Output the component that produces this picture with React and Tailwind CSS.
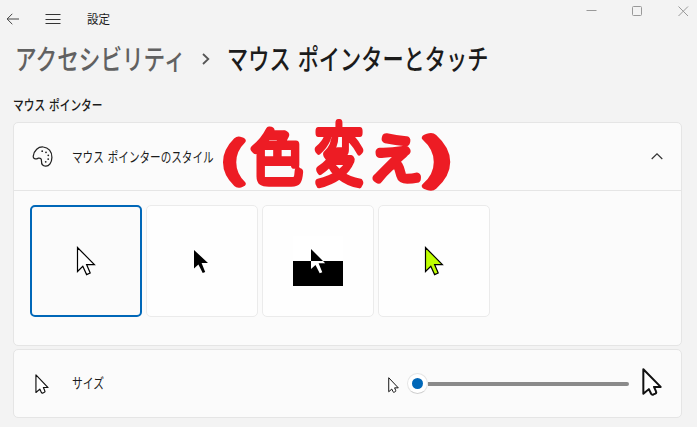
const CLASSIC = "M0.5 0.5V24.5L5.8 19.3L9.6 27.6L13.2 26L9.6 17.6H17.4Z";

function Label({ className, children }) {
  return (
    <span className={`block w-max origin-left whitespace-nowrap ${className}`}>{children}</span>
  );
}

function OutlineCursor({ className, width }) {
  return (
    <svg className={className} viewBox="0 0 18 26" preserveAspectRatio="none" fill="white" stroke="#111" strokeWidth={width} strokeLinejoin="round">
      <path d="M1.2 1.2V24L6.2 19.6L8.2 23.9Q8.9 25.2 10.3 24.6L12 23.8Q13.2 23.1 12.6 21.8L10.8 17.6H16.8Z" />
    </svg>
  );
}

function Tile({ selected, children }) {
  return (
    <button
      className={`relative size-28 shrink-0 rounded-[5px] ${selected ? "border-2 border-[#0067b8] bg-[#fbfbfb]" : "border border-[#ebebeb] bg-[#fefefe]"}`}
    >
      {children}
    </button>
  );
}

function Annotation() {
  return (
    <svg
      className="pointer-events-none absolute left-[209px] top-[-12px] h-[88px] w-[244px] overflow-visible"
      viewBox="0 0 244 88"
      fill="#ed1c24"
      stroke="#ed1c24"
      strokeWidth="6.8"
      strokeLinejoin="round"
      strokeLinecap="round"
      fontFamily="'Noto Sans CJK JP', sans-serif"
      fontSize="50"
      fontWeight="100"
      textAnchor="middle"
    >
      <text transform="translate(9 48) scale(1.45 .89)" y="19" strokeWidth="7.5">(</text>
      <text transform="translate(54 46) scale(1.02 1.15)" y="19">色</text>
      <text transform="translate(116 42) scale(.96 1.35)" y="19" strokeWidth="5.8">変</text>
      <text transform="translate(173 47) scale(1.05 1.05)" y="19" strokeWidth="8">え</text>
      <text transform="translate(216 47) scale(1.8 1)" y="19" strokeWidth="7.5">)</text>
    </svg>
  );
}

export default function App() {
  return (
    <main
      lang="ja"
      className="flex h-[427px] w-[697px] flex-col overflow-hidden bg-[#f3f3f3] font-['Noto_Sans_CJK_JP',sans-serif] text-[#1b1b1b]"
    >
      <header className="flex h-[38px] shrink-0 items-start pl-[6px]">
        <svg className="mt-[13px] h-3 w-[14px]" viewBox="0 0 14 12" fill="none" stroke="#444">
          <path d="M13 6H1.2M6.3 .8L1.1 6L6.3 11.2" />
        </svg>
        <svg className="ml-[25px] mt-[13px] h-3 w-4" viewBox="0 0 16 12" stroke="#333">
          <path d="M0.5 1.5H15.5M0.5 6.5H15.5M0.5 10.5H15.5" />
        </svg>
        <Label className="ml-[26px] mt-[10px] text-[12px] leading-[18px] scale-x-[.96]">設定</Label>
        <div className="ml-auto flex pr-[8px] pt-[5px] text-[#999]">
          <svg className="h-3 w-[11px]" viewBox="0 0 11 12" stroke="currentColor">
            <path d="M.5 5.5H10.5" />
          </svg>
          <svg className="ml-[35px] h-3 w-[11px]" viewBox="0 0 11 12" fill="none" stroke="currentColor">
            <rect x=".5" y="1.5" width="9" height="9" rx="1" />
          </svg>
          <svg className="ml-[35px] h-3 w-[11px]" viewBox="0 0 11 12" stroke="currentColor">
            <path d="M.5 1.5L10 11M10 1.5L.5 11" />
          </svg>
        </div>
      </header>

      <h1 className="flex h-10 shrink-0 items-center pl-[15px] text-[28px] font-medium leading-10">
        <span className="w-[187px]">
          <Label className="text-[#616161] scale-x-[.772]">アクセシビリティ</Label>
        </span>
        <svg className="mt-[2px] h-3 w-2" viewBox="0 0 8 12" fill="none" stroke="#555" strokeWidth="1.8">
          <path d="M1 1L6.3 6L1 11" />
        </svg>
        <span className="ml-[17px] w-[280px]">
          <Label className="[word-spacing:3px] scale-x-[.757]">マウス ポインターとタッチ</Label>
        </span>
      </h1>

      <h2 className="mt-4 shrink-0 pl-[13px] text-[14px] font-medium leading-5">
        <Label className="[word-spacing:2px] scale-x-[.764]">マウス ポインター</Label>
      </h2>

      <section className="relative ml-[13px] mt-2 h-56 w-[669px] shrink-0 rounded-[5px] border border-[#e5e5e5] bg-[#fbfbfb]">
        <div className="flex h-[68px] items-center border-b border-[#e5e5e5] pl-[18px] pr-[18px]">
          <svg className="h-[21px] w-[21px]" viewBox="0 0 21 21" fill="none" stroke="#222" strokeWidth="1.25">
            <path d="M1.2 10.3C2 4 6.4.7 11.1 1C16.5 1.4 20 5.7 19.9 11.4C19.8 16.8 17 20.3 13.6 20.1C10.4 19.9 9.4 17.6 9.5 15.2C9.6 12.8 8.1 11.6 6.3 12.2C5.1 12.6 4.4 13.4 3 12.8C1.7 12.4 1 11.7 1.2 10.3Z" />
            <g fill="#222" stroke="none">
              <circle cx="10.2" cy="5.2" r=".9" />
              <circle cx="14" cy="6.3" r=".9" />
              <circle cx="16.3" cy="9.3" r=".9" />
              <circle cx="16.2" cy="13.1" r=".9" />
              <circle cx="13.7" cy="15.8" r=".9" />
            </g>
          </svg>
          <Label className="-mt-[2px] ml-[19px] text-[14px] leading-5 [word-spacing:2px] scale-x-[.757]">マウス ポインターのスタイル</Label>
          <svg className="ml-auto h-[7px] w-3" viewBox="0 0 12 7" fill="none" stroke="#333" strokeWidth="1.2">
            <path d="M.7 6L6 .9L11.3 6" />
          </svg>
        </div>
        <div className="flex gap-1 pl-4 pt-[14px]">
          <Tile selected>
            <svg className="ml-[45px] h-[29px] w-[18px] overflow-visible" viewBox="0 0 18 29" fill="white" stroke="black" strokeWidth="1.2">
              <path d={CLASSIC} />
            </svg>
          </Tile>
          <Tile>
            <svg className="ml-[47px] h-[23px] w-[14px]" viewBox="0 0 14 23">
              <path d="M0 0V18.5L4.4 14.6L8.7 23L11.2 22L7.6 13H14Z" />
            </svg>
          </Tile>
          <Tile>
            <svg className="-mt-px ml-[30px] h-[50px] w-[50px]" viewBox="0 0 50 50">
              <path fill="white" d="M0 0H50V25H0Z" />
              <path d="M0 25H50V50H0Z" />
              <path d="M18 13V25H30Z" />
              <path fill="white" d="M18 25V33L22.5 29L26.7 37.3L29.3 36.2L25.6 27.2H32.2L30 25Z" />
            </svg>
          </Tile>
          <Tile>
            <svg className="ml-[46px] h-[29px] w-[18px] overflow-visible" viewBox="0 0 18 29" fill="#bfff00" stroke="black" strokeWidth="1.2">
              <path d={CLASSIC} />
            </svg>
          </Tile>
        </div>
        <Annotation />
      </section>

      <section className="ml-[13px] mt-[3px] flex h-[69px] w-[669px] shrink-0 items-center rounded-[5px] border border-[#e5e5e5] bg-[#fbfbfb] pl-[21px]">
        <OutlineCursor className="h-5 w-[14px]" width="1.5" />
        <span className="-mt-[3px] ml-[23px] w-[316px]">
          <Label className="text-[14px] leading-5 scale-x-[.77]">サイズ</Label>
        </span>
        <OutlineCursor className="mt-[2px] h-4 w-[11px]" width="1.6" />
        <div className="ml-[8px] flex w-[222px] items-center">
          <span className="flex size-[21px] shrink-0 items-center justify-center rounded-full border border-[#e5e5e5] border-b-[#cfcfcf] bg-white">
            <span className="size-[11px] rounded-full bg-[#0067b8]" />
          </span>
          <span className="h-1 flex-1 rounded-r-full bg-[#8a8a8a]" />
        </div>
        <OutlineCursor className="-mt-[3px] ml-[13px] h-7 w-5" width="1.8" />
      </section>
    </main>
  );
}
